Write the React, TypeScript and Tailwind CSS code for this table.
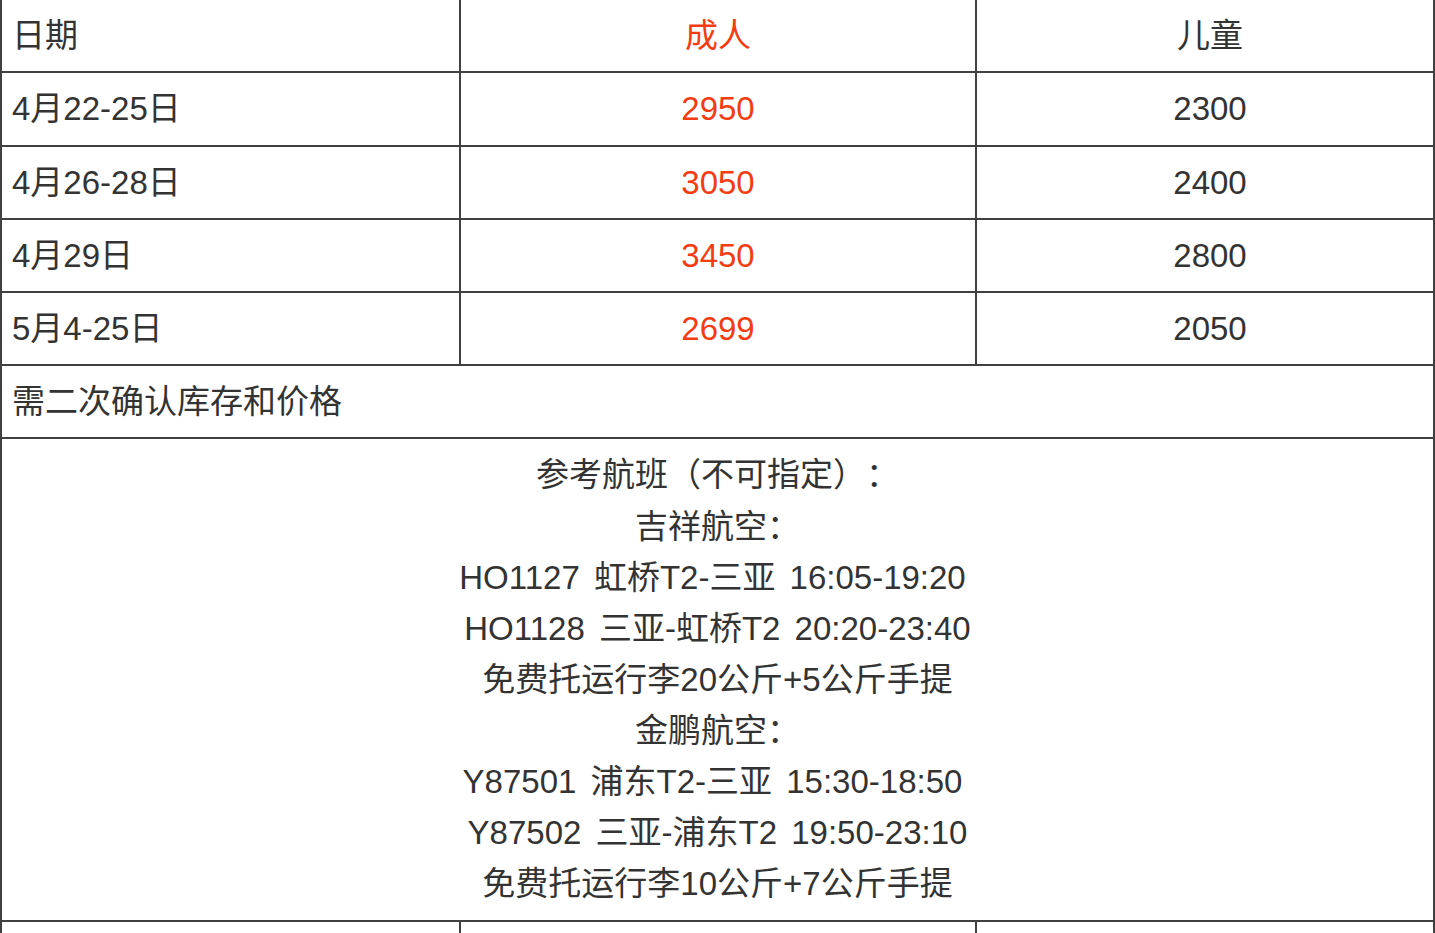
import React from "react";

const rows = [
  { d: "4月22-25日", a: "2950", c: "2300", h: "h-[74px]" },
  { d: "4月26-28日", a: "3050", c: "2400", h: "h-[73px]" },
  { d: "4月29日", a: "3450", c: "2800", h: "h-[73px]" },
  { d: "5月4-25日", a: "2699", c: "2050", h: "h-[73px]" },
];

const flights: { t: string; cls: string }[] = [
  { t: "参考航班（不可指定）：", cls: "leading-[53px]" },
  { t: "吉祥航空：", cls: "" },
  { t: "HO1127 虹桥T2-三亚 16:05-19:20", cls: "[word-spacing:5px] pr-[10px]" },
  { t: "HO1128 三亚-虹桥T2 20:20-23:40", cls: "[word-spacing:5px]" },
  { t: "免费托运行李20公斤+5公斤手提", cls: "" },
  { t: "金鹏航空：", cls: "" },
  { t: "Y87501 浦东T2-三亚 15:30-18:50", cls: "[word-spacing:5px] pr-[10px]" },
  { t: "Y87502 三亚-浦东T2 19:50-23:10", cls: "[word-spacing:5px]" },
  { t: "免费托运行李10公斤+7公斤手提", cls: "" },
];

function Row({ d, a, c, h = "h-[73px]" }: { d: string; a: string; c: string; h?: string }) {
  return (
    <div className={`flex ${h} border-b-2 border-[#404040]`}>
      <div className="w-[459px] shrink-0 border-r-2 border-[#404040] flex items-center pl-[10px]">{d}</div>
      <div className="w-[516px] shrink-0 border-r-2 border-[#404040] flex items-center justify-center text-[#f43c13]">{a}</div>
      <div className="flex-1 flex items-center justify-center pl-[10px]">{c}</div>
    </div>
  );
}

export default function App() {
  return (
    <div
      className="w-[1435px] h-[933px] overflow-hidden bg-white text-[#333333] text-[33px] [text-spacing-trim:space-all]"
      style={{ fontFamily: '"Liberation Sans", "Noto Sans CJK SC", sans-serif' }}
    >
      <div className="border-l-2 border-r-2 border-[#404040]">
        <Row d="日期" a="成人" c="儿童" />
        {rows.map((r) => (
          <Row key={r.d} {...r} />
        ))}
        <div className="h-[73px] border-b-2 border-[#404040] flex items-center pl-[10px]">
          需二次确认库存和价格
        </div>
        <div className="h-[483px] border-b-2 border-[#404040] pt-[9px] flex flex-col items-center leading-[51px]">
          {flights.map((f) => (
            <div key={f.t} className={`whitespace-pre ${f.cls}`}>
              {f.t}
            </div>
          ))}
        </div>
        <Row d="" a="" c="" />
      </div>
    </div>
  );
}
